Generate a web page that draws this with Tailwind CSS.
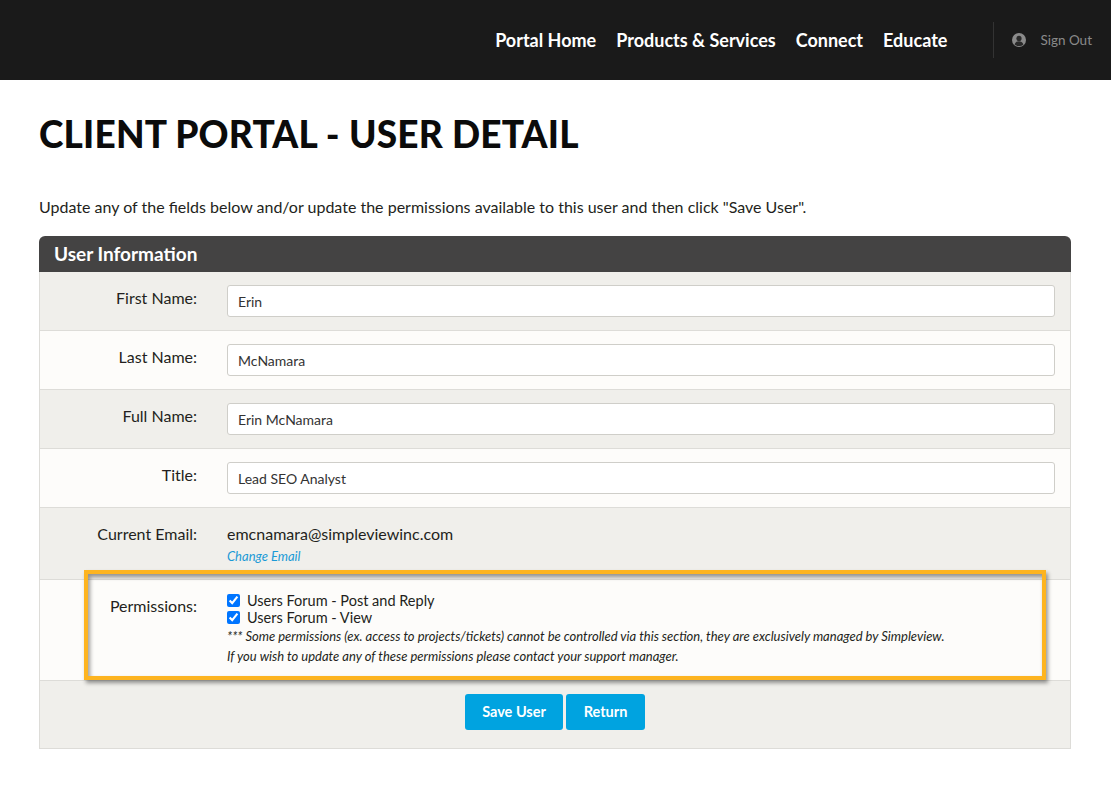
<!DOCTYPE html>
<html>
<head>
<meta charset="utf-8">
<script src="https://cdn.jsdelivr.net/npm/@tailwindcss/browser@4"></script>
</head>
<body class="bg-white font-['Lato','Open_Sans',sans-serif] text-[#231f20] m-0">
<div class="w-[1111px] h-[802px] overflow-hidden">
  <header class="h-[80px] bg-[#1a1a1a] flex items-center justify-end">
    <nav class="flex gap-[20px] text-white font-bold text-[18px] leading-none">
      <a>Portal Home</a><a>Products &amp; Services</a><a>Connect</a><a>Educate</a>
    </nav>
    <div class="ml-[46px] mr-[19px] h-[36px] border-l border-[#333] pl-[18px] flex items-center gap-[14px] text-[#8a8a8a] text-[13.5px]">
      <svg width="14" height="14" viewBox="0 0 14 14"><circle cx="7" cy="7" r="7" fill="#8a8a8a"/><circle cx="7" cy="5.4" r="2.6" fill="#2a2a2a"/><path d="M2.6 11.5c.7-2.4 2.5-3.3 4.4-3.3s3.7.9 4.4 3.3A6 6 0 0 1 7 13a6 6 0 0 1-4.4-1.5z" fill="#2a2a2a"/></svg>
      <span>Sign Out</span>
    </div>
  </header>
  <main class="px-[39px] w-[1110px]">
    <h1 class="pt-[32px] text-[37px] leading-[44px] font-black text-[#0b0b0b] tracking-[0.2px]">CLIENT PORTAL - USER DETAIL</h1>
    <p class="mt-[39px] text-[16px] leading-[24px]">Update any of the fields below and/or update the permissions available to this user and then click "Save User".</p>
    <section class="relative mt-[17px] w-[1032px]">
      <h2 class="h-[36px] bg-[#444343] rounded-t-[6px] text-white font-bold text-[19px] leading-[35px] pl-[15px]">User Information</h2>
      <div class="border-x border-b border-[#dddcd8]">
        <div class="h-[59px] bg-[#f0efeb] border-b border-[#dddcd8] flex">
          <label class="w-[157px] text-right text-[16px] pt-[15px] leading-[22px]">First Name:</label>
          <div class="ml-[30px] pt-[13px]"><input value="Erin" class="w-[828px] h-[32px] bg-white border border-[#cfcec9] rounded-[3px] px-[10px] text-[14px] text-[#333]"></div>
        </div>
        <div class="h-[59px] bg-[#fdfcfa] border-b border-[#dddcd8] flex">
          <label class="w-[157px] text-right text-[16px] pt-[15px] leading-[22px]">Last Name:</label>
          <div class="ml-[30px] pt-[13px]"><input value="McNamara" class="w-[828px] h-[32px] bg-white border border-[#cfcec9] rounded-[3px] px-[10px] text-[14px] text-[#333]"></div>
        </div>
        <div class="h-[59px] bg-[#f0efeb] border-b border-[#dddcd8] flex">
          <label class="w-[157px] text-right text-[16px] pt-[15px] leading-[22px]">Full Name:</label>
          <div class="ml-[30px] pt-[13px]"><input value="Erin McNamara" class="w-[828px] h-[32px] bg-white border border-[#cfcec9] rounded-[3px] px-[10px] text-[14px] text-[#333]"></div>
        </div>
        <div class="h-[59px] bg-[#fdfcfa] border-b border-[#dddcd8] flex">
          <label class="w-[157px] text-right text-[16px] pt-[15px] leading-[22px]">Title:</label>
          <div class="ml-[30px] pt-[13px]"><input value="Lead SEO Analyst" class="w-[828px] h-[32px] bg-white border border-[#cfcec9] rounded-[3px] px-[10px] text-[14px] text-[#333]"></div>
        </div>
        <div class="h-[72px] bg-[#f0efeb] border-b border-[#dddcd8] flex">
          <label class="w-[157px] text-right text-[16px] pt-[15px] leading-[22px]">Current Email:</label>
          <div class="ml-[30px] pt-[15px]">
            <div class="text-[16px] leading-[22px]">emcnamara@simpleviewinc.com</div>
            <a class="block mt-[1px] text-[13px] leading-[20px] italic text-[#1b9ad6]">Change Email</a>
          </div>
        </div>
        <div class="h-[101px] bg-[#fdfcfa] border-b border-[#dddcd8] flex">
          <label class="w-[157px] text-right text-[16px] pt-[15px] leading-[22px]">Permissions:</label>
          <div class="ml-[30px] pt-[12px]">
            <label class="flex items-center gap-[7px] text-[14.5px] h-[17px]"><input type="checkbox" checked class="w-[13px] h-[13px] accent-[#0075ff]">Users Forum - Post and Reply</label>
            <label class="flex items-center gap-[7px] text-[14.5px] h-[17px]"><input type="checkbox" checked class="w-[13px] h-[13px] accent-[#0075ff]">Users Forum - View</label>
            <p class="italic text-[13px] leading-[20px] mt-[0px]">*** Some permissions (ex. access to projects/tickets) cannot be controlled via this section, they are exclusively managed by Simpleview.</p>
            <p class="italic text-[13px] leading-[20px]">If you wish to update any of these permissions please contact your support manager.</p>
          </div>
        </div>
        <div class="h-[67px] bg-[#f0efeb] flex justify-center gap-[3px] pt-[13px]">
          <button class="w-[98px] h-[36px] bg-[#00a3e0] rounded-[3px] text-white font-bold text-[14.5px]">Save User</button>
          <button class="w-[79px] h-[36px] bg-[#00a3e0] rounded-[3px] text-white font-bold text-[14.5px]">Return</button>
        </div>
      </div>
      <div class="absolute left-[45px] top-[334px] w-[962px] h-[110px] border-[4px] border-[#fdb420] shadow-[inset_2px_3px_4px_rgba(0,0,0,0.4),2px_3px_4px_rgba(0,0,0,0.4)] pointer-events-none"></div>
    </section>
  </main>
</div>
</body>
</html>
